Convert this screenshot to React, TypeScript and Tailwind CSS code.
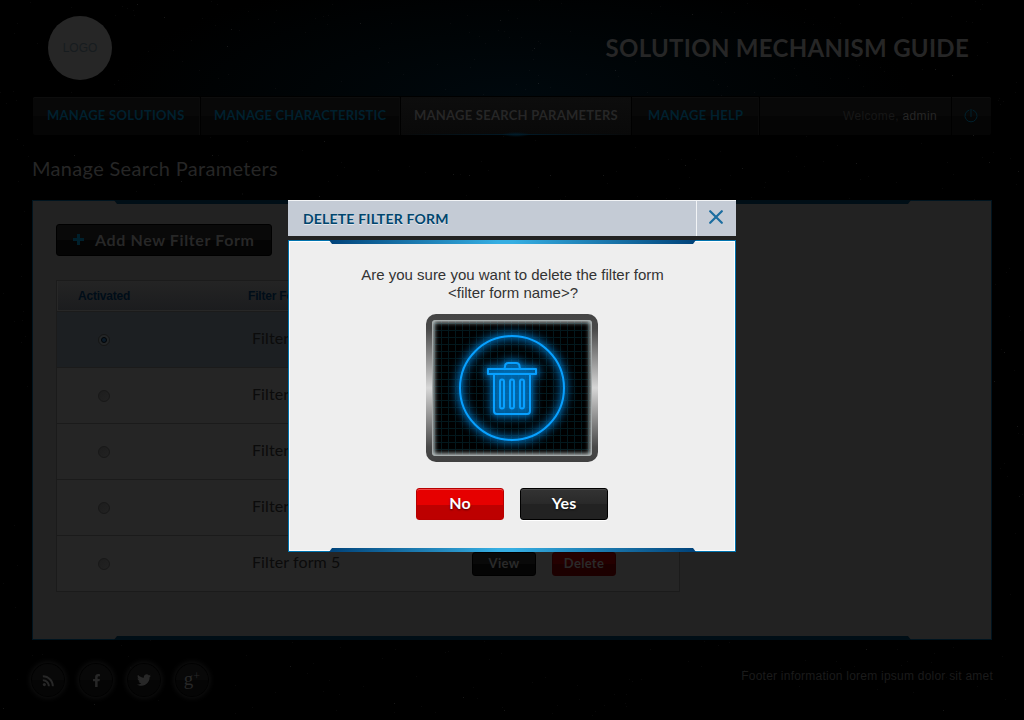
import React from "react";
import { FaFacebookF, FaTwitter } from "react-icons/fa";
import { MdRssFeed } from "react-icons/md";

const avenir = "font-[Lato,sans-serif]";
const arial = "font-['Liberation_Sans',sans-serif]";

function Stars() {
  let seed = 77;
  const rnd = () => {
    seed = (seed * 16807) % 2147483647;
    return seed / 2147483647;
  };
  const stars = Array.from({ length: 900 }, () => ({
    x: Math.floor(rnd() * 1024),
    y: Math.floor(rnd() * 720),
    o: rnd() > 0.9 ? 0.09 : 0.035,
  }));
  return (
    <svg className="absolute inset-0" width="1024" height="720" shapeRendering="crispEdges" aria-hidden="true">
      {stars.map((s, i) => (
        <rect key={i} x={s.x} y={s.y} width="1" height="1" fill="#fff" opacity={s.o} />
      ))}
    </svg>
  );
}

function NavItem({ label, box, tracking, active }: { label: string; box: string; tracking: string; active?: boolean }) {
  return (
    <div
      className={`relative flex h-full items-center border-r border-black ${box} ${
        active ? "bg-linear-to-b from-[#0d0d0d] to-[#090909] text-[#262626]" : "text-[#00202e] shadow-[inset_-1px_0_#0a0a0a]"
      }`}
    >
      <span className={`whitespace-nowrap text-[13px] font-bold ${tracking} ${avenir}`}>{label}</span>
      {active && (
        <>
          <span className="absolute bottom-0 left-0 h-px w-full bg-linear-to-r from-transparent via-[#001a28] to-transparent" />
          <span className="absolute -bottom-[2px] left-[101px] h-[5px] w-7 bg-[radial-gradient(closest-side,#001c2a,transparent)]" />
        </>
      )}
    </div>
  );
}

function Radio({ on }: { on?: boolean }) {
  return (
    <span
      className={`flex size-3 items-center justify-center rounded-full border ${
        on ? "border-[#151515] bg-[#232526]" : "border-[#181818] bg-linear-to-br from-[#1d1d1d] to-[#222]"
      }`}
    >
      {on && <span className="size-[6px] rounded-full border border-[#020406] bg-[#0a1a28]" />}
    </span>
  );
}

function Row({ n, on }: { n: number; on?: boolean }) {
  return (
    <div className={`flex h-14 items-center border-b border-[#1b1b1b] ${on ? "bg-[#1c1f22]" : "bg-[#252525]"}`}>
      <div className="w-[195px] pl-[41px]">
        <Radio on={on} />
      </div>
      <div className={`w-[220px] whitespace-nowrap pb-[3px] text-[16px] tracking-[0.1px] text-[#0b0b0b] ${avenir}`}>Filter form {n}</div>
      <div className={`flex gap-4 text-[13px] font-bold text-[#2a2a2a] ${avenir}`}>
        <span className="flex h-6 w-16 items-center justify-center rounded-[3px] border border-black bg-linear-to-b from-[#090909] from-50% to-[#040404] to-50% tracking-[0.3px]">
          View
        </span>
        <span className="flex h-6 w-16 items-center justify-center rounded-[3px] border border-[#1c0000] bg-linear-to-b from-[#250000] from-50% to-[#1c0000] to-50% tracking-[0.3px]">
          Delete
        </span>
      </div>
    </div>
  );
}

function Social({ children }: { children: React.ReactNode }) {
  return (
    <span className="flex size-8 items-center justify-center rounded-full bg-linear-to-b from-[#080808] from-50% to-[#050505] to-50% text-[#272727] shadow-[0_0_0_1px_#020202,0_0_6px_1px_#161616]">
      {children}
    </span>
  );
}

function TrashPicture() {
  return (
    <svg width="172" height="148" viewBox="0 0 172 148" aria-hidden="true">
      <defs>
        <linearGradient id="frame" x1="0" y1="0" x2="0" y2="1">
          <stop offset="0" stopColor="#444" />
          <stop offset="0.1" stopColor="#484848" />
          <stop offset="0.5" stopColor="#d6d6d6" />
          <stop offset="0.9" stopColor="#484848" />
          <stop offset="1" stopColor="#404040" />
        </linearGradient>
        <pattern id="grid" x="1" y="2" width="7" height="7" patternUnits="userSpaceOnUse">
          <path d="M0 .5H7M.5 0V7" stroke="#03181d" strokeWidth="1" fill="none" />
        </pattern>
        <filter id="blurL" x="-40%" y="-40%" width="180%" height="180%" colorInterpolationFilters="sRGB">
          <feGaussianBlur stdDeviation="5" />
        </filter>
        <filter id="blurS" x="-40%" y="-40%" width="180%" height="180%" colorInterpolationFilters="sRGB">
          <feGaussianBlur stdDeviation="2" />
        </filter>
        <clipPath id="screen">
          <rect x="6" y="6" width="160" height="136" rx="3" />
        </clipPath>
        <g id="bin" fill="none" strokeLinejoin="round">
          <circle cx="86" cy="74" r="52" />
          <path d="M62 55h48v5h-48z" />
          <path d="M78 55q1-1 1-2.500q0-3.500 3.500-3.500h7.500q3.500 0 3.500 3.500q0 1.500 1 2.500" />
          <path d="M68 60v37a3 3 0 0 0 3 3h30a3 3 0 0 0 3-3v-37" />
          <rect x="74" y="65.500" width="4" height="29" rx="2" />
          <rect x="84" y="65.500" width="4" height="29" rx="2" />
          <rect x="94" y="65.500" width="4" height="29" rx="2" />
        </g>
      </defs>
      <rect width="172" height="148" rx="10" fill="url(#frame)" />
      <g clipPath="url(#screen)">
        <rect x="6" y="6" width="160" height="136" fill="#000" />
        <rect x="6" y="6" width="160" height="136" fill="url(#grid)" />
        <use href="#bin" stroke="#0078c8" strokeWidth="8" filter="url(#blurL)" opacity="0.75" />
        <use href="#bin" stroke="#0084d8" strokeWidth="3" filter="url(#blurS)" opacity="0.5" />
        <use href="#bin" stroke="#08a0ff" strokeWidth="2" />
        <rect x="5" y="5" width="162" height="138" rx="4" fill="none" stroke="#b9c0c0" strokeWidth="7" filter="url(#blurS)" />
      </g>
      <rect x="6.500" y="6.500" width="159" height="135" rx="3" fill="none" stroke="#a4aaaa" />
    </svg>
  );
}

function DialogBar({ flip }: { flip?: boolean }) {
  return (
    <span
      className={`absolute left-[41px] h-1 w-[367px] bg-[linear-gradient(90deg,#004279,#36aee2_46%,#36aee2_50%,#004279)] ${
        flip
          ? "bottom-0 [clip-path:polygon(3px_0,calc(100%-3px)_0,100%_100%,0_100%)]"
          : "top-0 [clip-path:polygon(0_0,100%_0,calc(100%-3px)_100%,3px_100%)]"
      }`}
    />
  );
}

function Dialog() {
  return (
    <div className="absolute inset-0 flex items-start justify-center pt-[200px]">
      <div className="flex w-[448px] flex-col gap-1 bg-[#222]">
        <div className="flex h-9 border-t border-[#f2f4f6] bg-[#c4cbd5]">
          <h2 className={`flex flex-1 items-center pb-px pl-[15px] text-[14px] font-bold tracking-[0.19px] text-[#00466e] [text-shadow:0_1px_#e4e8ee] ${avenir}`}>
            DELETE FILTER FORM
          </h2>
          <button className="flex w-10 items-center justify-center border-l border-[#f2f4f6] pb-1 pr-px" aria-label="Close">
            <svg width="14" height="14" viewBox="0 0 14 14">
              <path d="M1.200 1.200l11.600 11.600M12.800 1.200L1.200 12.800" stroke="#1b6da0" strokeWidth="2.200" strokeLinecap="round" />
            </svg>
          </button>
        </div>
        <div className="relative flex h-[312px] flex-col items-center border border-[#0073ae] bg-[#eee] shadow-[inset_0_0_0_1px_#fff]">
          <span className="absolute -left-px -top-px h-full w-[446px]">
            <DialogBar />
          </span>
          <span className="absolute -bottom-px -left-px h-full w-[446px]">
            <DialogBar flip />
          </span>
          <p className={`mt-[25px] text-center text-[15px] leading-[18px] text-[#333] ${arial}`}>
            <span className="pl-px">Are you sure you want to delete the filter form</span>
            <br />
            <span className="pl-[2px]">&lt;filter form name&gt;?</span>
          </p>
          <div className="mt-[12px]">
            <TrashPicture />
          </div>
          <div className={`mt-[26px] flex gap-4 text-[16px] font-bold text-white [text-shadow:0_1px_2px_#0009] ${avenir}`}>
            <button className="h-8 w-[88px] rounded-[3px] border border-[#b80000] bg-linear-to-b from-[#e60000] from-53% to-[#bd0000] to-53% pb-[2px] tracking-[0.2px] shadow-[inset_0_1px_#f04848] [text-shadow:inherit]">
              No
            </button>
            <button className="h-8 w-[88px] rounded-[3px] border border-black bg-[linear-gradient(#333,#292929_50%,#222_50%)] pb-[2px] tracking-[0.2px] shadow-[inset_0_1px_#484848,0_1px_#fff] [text-shadow:inherit]">
              Yes
            </button>
          </div>
        </div>
      </div>
    </div>
  );
}

export default function App() {
  return (
    <div className="relative h-[720px] w-[1024px] overflow-hidden bg-black">
      <div className="absolute left-[112px] top-0 h-[97px] w-[800px] bg-[radial-gradient(ellipse_400px_125px_at_50%_100%,#00080d,#000406_50%,transparent)]" />
      <Stars />
      <div className="relative flex h-full flex-col px-8">
        <header className="flex h-[97px] items-start justify-between pl-4 pr-[23px] pt-4">
          <div className={`flex size-16 items-center justify-center rounded-full bg-[#262626] text-[12px] text-[#171c1f] ${arial}`}>LOGO</div>
          <h1 className={`mt-[14px] text-[24px] font-bold leading-9 tracking-[0.29px] text-[#262626] ${avenir}`}>SOLUTION MECHANISM GUIDE</h1>
        </header>

        <nav className="mx-px flex h-[38px] rounded-[2px] bg-linear-to-b from-[#080808] from-50% to-[#050505] to-50% shadow-[inset_0_1px_#0d0d0d,0_-1px_#000]">
          <NavItem label="MANAGE SOLUTIONS" box="w-[168px] pl-[14px]" tracking="tracking-[0.27px]" />
          <NavItem label="MANAGE CHARACTERISTIC" box="w-[200px] pl-[13px]" tracking="tracking-[0.19px]" />
          <NavItem label="MANAGE SEARCH PARAMETERS" box="w-[231px] pl-[13px]" tracking="tracking-[0.24px]" active />
          <NavItem label="MANAGE HELP" box="w-[128px] pl-4" tracking="tracking-[0.25px]" />
          <div className={`flex flex-1 items-center justify-end border-r border-black pr-[14px] text-[12px] text-[#171717] ${arial}`}>
            <span className="tracking-[0.35px]">
              Welcome, <span className="text-[#262626]">admin</span>
            </span>
          </div>
          <div className="flex w-[39px] items-center justify-center pb-px pr-px">
            <svg width="14" height="14" viewBox="0 0 14 14" fill="none" stroke="#00202c">
              <path d="M5.300 1.100a6 6 0 1 0 3.400 0M7 0v8" />
            </svg>
          </div>
        </nav>

        <h2 className={`mt-[18px] h-[47px] text-[20px] leading-[30px] tracking-[0.32px] text-[#262626] ${avenir}`}>Manage Search Parameters</h2>

        <main className="relative h-[440px] border border-[#00141f] bg-[#222] pl-[23px] pt-[23px]">
          <span className="absolute -top-px left-[81px] h-1 w-[797px] bg-[#000e16] [clip-path:polygon(0_0,100%_0,calc(100%-3px)_100%,3px_100%)]" />
          <span className="absolute -bottom-px left-[81px] h-1 w-[797px] bg-[#000e16] [clip-path:polygon(3px_0,calc(100%-3px)_0,100%_100%,0_100%)]" />
          <button
            className={`flex h-8 w-[216px] items-center whitespace-nowrap rounded-[3px] border border-black bg-linear-to-b from-[#090909] from-50% to-[#040404] to-50% pb-px pl-4 text-[16px] font-bold tracking-[0.62px] text-[#272727] ${avenir}`}
          >
            <svg width="11" height="11" viewBox="0 0 11 11" className="mr-[11px]">
              <path d="M4 0h3v4h4v3H7v4H4V7H0V4h4z" fill="#00202c" />
            </svg>
            Add New Filter Form
          </button>
          <section className="mt-6 w-[624px] border-x border-t border-[#1b1b1b]">
            <div className={`flex h-[31px] items-center border-b border-[#1b1b1b] bg-linear-to-b from-[#242424] to-[#1b1c1e] text-[12px] font-bold text-[#000d18] shadow-[inset_1px_-1px_#272727] ${arial}`}>
              <span className="w-[191px] pl-[21px] tracking-[-0.2px]">Activated</span>
              <span className="tracking-[-0.2px]">Filter Form Name</span>
            </div>
            <Row n={1} on />
            <Row n={2} />
            <Row n={3} />
            <Row n={4} />
            <Row n={5} />
          </section>
        </main>

        <footer className="flex items-center justify-between pt-6">
          <div className="flex gap-4">
            <Social>
              <MdRssFeed size={17} />
            </Social>
            <Social>
              <FaFacebookF size={13} />
            </Social>
            <Social>
              <FaTwitter size={14} />
            </Social>
            <Social>
              <span className="flex items-start pb-1 font-['Liberation_Serif',serif] text-[19px] leading-[19px]">
                g<span className="pt-px text-[12px] leading-[12px]">+</span>
              </span>
            </Social>
          </div>
          <p className={`-mr-px pb-2 text-[12px] tracking-[0.23px] text-[#1b1b1b] ${arial}`}>Footer information lorem ipsum dolor sit amet</p>
        </footer>
      </div>
      <Dialog />
    </div>
  );
}
